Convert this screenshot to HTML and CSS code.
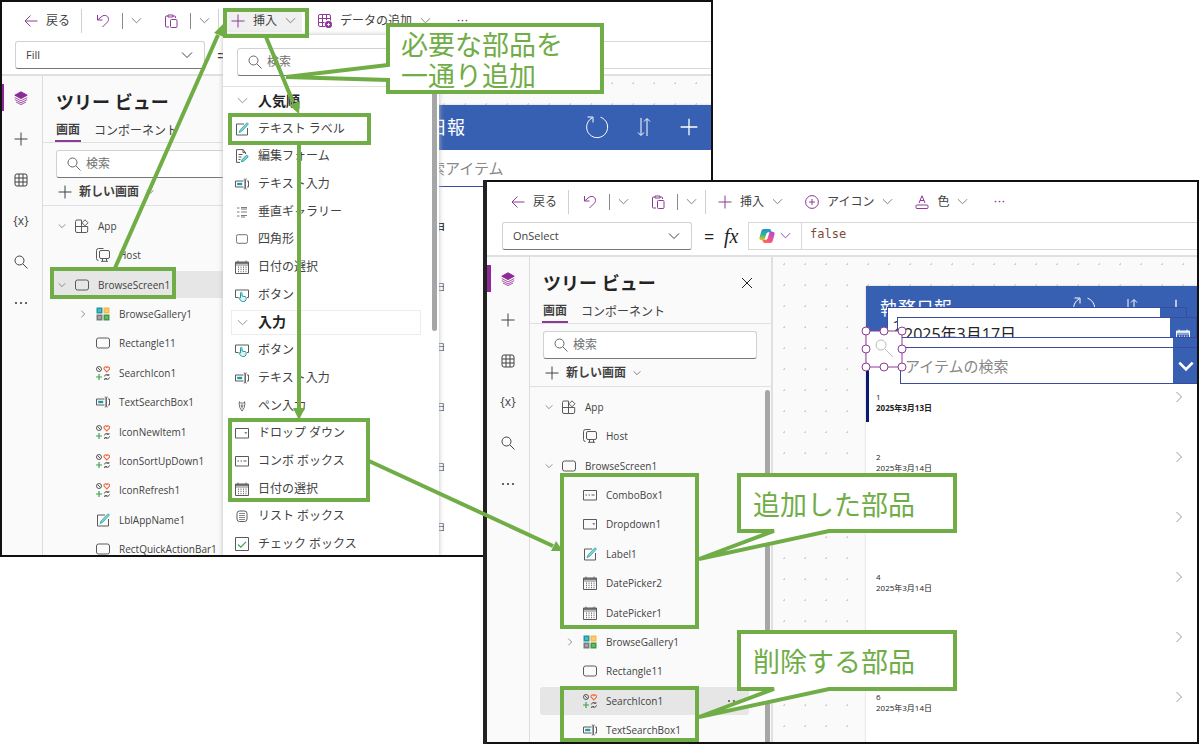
FILE: index.html
```html
<!DOCTYPE html>
<html lang="ja">
<head>
<meta charset="utf-8">
<meta name="viewport" content="width=device-width, initial-scale=1">
<title>部品の追加と削除</title>
<link rel="stylesheet" href="styles.css">
</head>
<body>
<svg class="symbols" aria-hidden="true">
  <defs>
    <linearGradient id="cop-a" x1="0" y1="0" x2="0" y2="1"><stop offset="0" stop-color="#1d8fe8"/><stop offset=".5" stop-color="#2fb58a"/><stop offset="1" stop-color="#f2c51d"/></linearGradient>
    <linearGradient id="cop-b" x1="1" y1="0" x2="0" y2="1"><stop offset="0" stop-color="#a04be8"/><stop offset=".5" stop-color="#ee5090"/><stop offset="1" stop-color="#ff7a3c"/></linearGradient>
  </defs>
  <symbol id="arrow-left" viewBox="0 0 14 14"><path d="M13.5 7H1M6.5 1.5 1 7l5.500 5.500"/></symbol>
  <symbol id="undo" viewBox="0 0 14 14"><path d="M1.500 1v5h5M1.800 5.800 6 2.300c2.500-1.900 6.500-.6 6.500 3 0 1.800-1 2.700-2 3.700L6.500 13"/></symbol>
  <symbol id="paste" viewBox="0 0 14 14"><path d="M5 13H2.500a1 1 0 0 1-1-1V3a1 1 0 0 1 1-1H4M9 2h1.500a1 1 0 0 1 1 1v1M4 1h5v2H4z"/><rect x="6.500" y="5.500" width="6.500" height="8" rx="1"/></symbol>
  <symbol id="chev" viewBox="0 0 12 12"><path d="m1 3.500 5 5 5-5"/></symbol>
  <symbol id="chev-r" viewBox="0 0 12 12"><path d="m3.500 1 5 5-5 5"/></symbol>
  <symbol id="plus" viewBox="0 0 14 14"><path d="M7 .5v13M.5 7h13"/></symbol>
  <symbol id="data" viewBox="0 0 14 14"><path d="M7 12.500H2a1.500 1.500 0 0 1-1.500-1.500V2A1.500 1.500 0 0 1 2 .5h9A1.500 1.500 0 0 1 12.500 2v4.500M.5 4.500h12M.5 8.500h6M4.500.5v12M8.500.5V6"/><circle cx="10.500" cy="10.500" r="3.200" fill="currentColor"/><path d="M10.500 9v3M9 10.500h3" stroke="#fff" stroke-width=".9"/></symbol>
  <symbol id="circle-plus" viewBox="0 0 14 14"><circle cx="7" cy="7" r="6.400"/><path d="M7 4v6M4 7h6"/></symbol>
  <symbol id="font-color" viewBox="0 0 14 14"><path d="M4 8 7 .8 10 8M5 5.500h4"/><rect x="1" y="10" width="12" height="3.500" rx="1"/></symbol>
  <symbol id="dots" viewBox="0 0 14 14"><g fill="currentColor" stroke="none"><circle cx="2" cy="7" r="1.100"/><circle cx="7" cy="7" r="1.100"/><circle cx="12" cy="7" r="1.100"/></g></symbol>
  <symbol id="close" viewBox="0 0 14 14"><path d="m2 2 10 10M12 2 2 12"/></symbol>
  <symbol id="search" viewBox="0 0 14 14"><circle cx="5.500" cy="5.500" r="4.500"/><path d="m8.900 8.900 4.600 4.600"/></symbol>
  <symbol id="layers" viewBox="0 0 14 14"><path d="M7 .8 13.200 4.200 7 7.600.8 4.200z" fill="currentColor"/><path d="m.8 6.500 6.200 3.400 6.200-3.400M.8 8.500 7 11.900l6.200-3.400M2 11l5 2.600 5-2.600" stroke-width=".8"/></symbol>
  <symbol id="table" viewBox="0 0 14 14"><rect x="1" y="1" width="12" height="12" rx="2"/><path d="M1 5h12M1 9h12M5 1v12M9 1v12"/></symbol>
  <symbol id="app" viewBox="0 0 14 14"><path d="M6.500 13.500H2A1.500 1.500 0 0 1 .5 12V2.500A1.500 1.500 0 0 1 2 1h4.500zM.5 7.500h12.200V12a1.500 1.500 0 0 1-1.500 1.500H6.500V7.500"/><path d="m10 .8 3 3-3 3-3-3z"/></symbol>
  <symbol id="host" viewBox="0 0 14 14"><path d="M2.500 12.500A2 2 0 0 1 .5 10.500V2.500a2 2 0 0 1 2-2h5"/><rect x="3.500" y="2.500" width="10" height="8" rx="1.500"/><path d="M6.500 10.500v2.800M10.500 10.500v2.800M5 13.300h7"/></symbol>
  <symbol id="rect" viewBox="0 0 14 14"><rect x=".5" y="2" width="13" height="10" rx="2"/></symbol>
  <symbol id="gallery" viewBox="0 0 14 14"><g stroke="none"><path d="M.5.5h6v6h-6z" fill="#1a9ba1"/><path d="M7.500.5h6v6h-6z" fill="#f8b84e"/><path d="M.5 7.500h6v6h-6z" fill="#7a7a7a"/><path d="M7.500 7.500h6v6h-6z" fill="#3f9a48"/><path d="M2 2h3v3H2z" fill="#4bb9bf"/><path d="M9 2h3v3H9z" fill="#ffc970"/><path d="M2 9h3v3H2z" fill="#a2a2a2"/><path d="M9 9h3v3H9z" fill="#67b56e"/></g></symbol>
  <symbol id="icons" viewBox="0 0 14 14"><circle cx="3" cy="3" r="2.500"/><path d="m1.300 1.300 3.400 3.400"/><path d="M10.800 6 8.200 3.200C7.300 1.500 9.600-.2 10.800 1.600 12-.2 14.300 1.500 13.400 3.200z" stroke="#f0643c" stroke-width="1.100"/><path d="M3 8v6M0 11h6" stroke="#3fa34d" stroke-width="1.200"/><path d="M8.300 10.500c.2-2 3-2.600 4.300-1.200h-2M13.600 11.300c-.2 2-3 2.700-4.500 1.300h2M12.900 8v1.500M8.600 14v-1.500"/></symbol>
  <symbol id="textin" viewBox="0 0 14 14"><path d="M8.500 10H.5V4h8M12 4h1.500v6H12M8.800 2c1 0 1.400.4 1.400 1v8c0 .6-.4 1-1.400 1M11.700 2c-1 0-1.500.4-1.500 1v8c0 .6.500 1 1.500 1"/><path d="M2.200 5.800h5v2.400h-5z" fill="#1a9ba1" stroke="none"/></symbol>
  <symbol id="label" viewBox="0 0 14 14"><path d="M9 2H1.500v11h11V6"/><path d="M4 10.500 5 8l6.500-6.800c.8-.8 2.300.5 1.500 1.400L6.500 9.500z" fill="#7fd6d2" stroke="#2ba5a0" stroke-width=".8"/></symbol>
  <symbol id="form" viewBox="0 0 14 14"><path d="M10.500 5V3.500L8 .6H1.500v12.800H5M8 .6v3h2.500M3.500 5.500h4M3.500 8h3M3.500 10.500h2"/><path d="m6.300 12.700.8-2.200 4.600-4.400 1.600 1.500-4.600 4.500z" fill="#7fd6d2" stroke="#2ba5a0"/></symbol>
  <symbol id="vgallery" viewBox="0 0 14 14"><path d="M2 3h2.500M2 7h2.500M2 11h2.500M6 2.500h6M6 4h6M6 7h6M6 10.500h6M6 12h4" stroke-width=".8"/></symbol>
  <symbol id="calendar" viewBox="0 0 14 14"><path d="M.5 2h13v11.500H.5z"/><path d="M.5 3h13" stroke-width="1.600"/><path d="M3 .5v2M11 .5v2M.5 5h13" stroke-width=".8"/><path d="M3.500 6.500v6M6 6.500v6M8.500 6.500v6M11 6.500v6" stroke-width=".8" stroke-dasharray="1.400 .8"/></symbol>
  <symbol id="button" viewBox="0 0 14 14"><path d="M3.500 9.500h-3V2h13v7.500H12"/><path d="M5.500 10V5.200c0-1.200 1.500-1.200 1.500 0V8l3.500.7c1.200.3 1 4.500-1.500 4.900-2.500.3-3-.6-5-3.300.2-.7 1-.8 1.500-.3z" stroke="#1a9ba1" fill="#dff3f2"/></symbol>
  <symbol id="pen" viewBox="0 0 14 14"><path d="M4 1.500v2h6v-2M3.500 3.500 4.500 9 7 13l2.500-4 1-5.500M7 7v3"/><circle cx="7" cy="6.500" r="1"/></symbol>
  <symbol id="dropdown" viewBox="0 0 14 14"><path d="M.5 2.500h13v9.500H.5z"/><path d="M9.300 6.200h3L10.800 8z" fill="currentColor" stroke="none"/></symbol>
  <symbol id="combo" viewBox="0 0 14 14"><path d="M.5 2.500h13v9.500H.5z"/><path d="M2.500 7h1.500M5.500 7H7M8.500 7h3"/></symbol>
  <symbol id="listbox" viewBox="0 0 14 14"><rect x="2" y="2" width="10" height="10.500" rx="2.500"/><path d="M4 4.500h6M4 6.500h6M4 8.500h6M4 10.500h6" stroke-width=".7"/></symbol>
  <symbol id="check" viewBox="0 0 14 14"><path d="M.5.5h13v13H.5z"/><path d="m3 7.500 2.800 2.700L11 4.800" stroke="#3fa34d" stroke-width="1.200"/></symbol>
  <symbol id="copilot" viewBox="0 0 16 16"><g stroke="none"><path d="M5 1h5.200c1.200 0 1.700.8 2 1.800l.4 1.400H9.800C8.300 4.200 7.600 5 7.200 6.300L6 10.500c-.4 1.300-1 1.700-2.300 1.700H2.500C.8 12.200.1 11 .6 9.200l1.600-5.700C2.700 1.700 3.500 1 5 1z" fill="url(#cop-a)"/><path d="M11 15H5.800c-1.200 0-1.700-.8-2-1.800l-.4-1.400h2.800c1.500 0 2.200-.8 2.600-2.100L10 5.500c.4-1.300 1-1.700 2.300-1.700h1.200c1.700 0 2.400 1.200 1.900 3l-1.600 5.700c-.5 1.800-1.300 2.500-2.800 2.500z" fill="url(#cop-b)"/></g></symbol>
  <symbol id="refresh" viewBox="0 0 24 24"><path d="M15.500 2.200a10.500 10.500 0 1 1-8.500.8M2.500 2h5.500v5.500"/></symbol>
  <symbol id="sort" viewBox="0 0 14 20"><path d="M4 1v17M1 15.500l3 3 3-3M10 19V2M7 4.500l3-3 3 3"/></symbol>
</svg>

<main class="stage">
  <section class="window window-back" aria-label="挿入前の画面">
    <div class="toolbar">
      <button class="tool"><svg class="i14"><use href="#arrow-left"/></svg>戻る</button>
      <span class="rule"></span>
      <button class="tool" aria-label="元に戻す"><svg class="i14"><use href="#undo"/></svg></button>
      <span class="split"></span>
      <button class="tool" aria-label="元に戻すの履歴"><svg class="i10 mute"><use href="#chev"/></svg></button>
      <button class="tool paste" aria-label="貼り付け"><svg class="i14"><use href="#paste"/></svg></button>
      <span class="split"></span>
      <button class="tool" aria-label="貼り付けオプション"><svg class="i10 mute"><use href="#chev"/></svg></button>
      <span class="rule close-rule"></span>
      <button class="tool insert open"><svg class="i14"><use href="#plus"/></svg>挿入<svg class="i10 mute"><use href="#chev"/></svg></button>
      <button class="tool wide"><svg class="i14"><use href="#data"/></svg>データの追加<svg class="i10 mute"><use href="#chev"/></svg></button>
      <button class="tool more" aria-label="その他"><svg class="i10"><use href="#dots"/></svg></button>
    </div>
    <div class="formula">
      <div class="property"><select aria-label="プロパティ"><option>Fill</option></select><svg class="i12"><use href="#chev"/></svg></div>
      <span class="equals">=</span>
      <div class="expression blank"></div>
    </div>
    <div class="body">
      <nav class="rail" aria-label="作成メニュー">
        <button class="active" aria-label="ツリー ビュー"><svg class="i14"><use href="#layers"/></svg></button>
        <button aria-label="挿入"><svg class="i14"><use href="#plus"/></svg></button>
        <button aria-label="データ"><svg class="i14"><use href="#table"/></svg></button>
        <button>{x}</button>
        <button aria-label="検索"><svg class="i14"><use href="#search"/></svg></button>
        <button aria-label="その他"><svg class="i14"><use href="#dots"/></svg></button>
      </nav>
      <aside class="tree">
        <header class="tree-head"><h2>ツリー ビュー</h2></header>
        <div class="tabs"><button class="on">画面</button><button>コンポーネント</button></div>
        <label class="search"><svg class="i14"><use href="#search"/></svg><input type="text" placeholder="検索" aria-label="ツリーを検索"></label>
        <button class="new"><svg class="i14"><use href="#plus"/></svg>新しい画面<svg class="i8"><use href="#chev"/></svg></button>
        <ul class="nodes">
          <li><svg class="i8 tw"><use href="#chev"/></svg><svg class="i14"><use href="#app"/></svg>App</li>
          <li class="sub"><svg class="i14"><use href="#host"/></svg>Host</li>
          <li class="sel"><svg class="i8 tw"><use href="#chev"/></svg><svg class="i14"><use href="#rect"/></svg>BrowseScreen1</li>
          <li class="sub"><svg class="i8 tw"><use href="#chev-r"/></svg><svg class="i14"><use href="#gallery"/></svg>BrowseGallery1</li>
          <li class="sub"><svg class="i14"><use href="#rect"/></svg>Rectangle11</li>
          <li class="sub"><svg class="i14"><use href="#icons"/></svg>SearchIcon1</li>
          <li class="sub"><svg class="i14"><use href="#textin"/></svg>TextSearchBox1</li>
          <li class="sub"><svg class="i14"><use href="#icons"/></svg>IconNewItem1</li>
          <li class="sub"><svg class="i14"><use href="#icons"/></svg>IconSortUpDown1</li>
          <li class="sub"><svg class="i14"><use href="#icons"/></svg>IconRefresh1</li>
          <li class="sub"><svg class="i14"><use href="#label"/></svg>LblAppName1</li>
          <li class="sub"><svg class="i14"><use href="#rect"/></svg>RectQuickActionBar1</li>
        </ul>
      </aside>
      <div class="canvas">
        <div class="app">
          <header class="app-bar"><h3>執務日報</h3><svg class="i24"><use href="#refresh"/></svg><svg class="sort"><use href="#sort"/></svg><svg class="i18"><use href="#plus"/></svg></header>
          <input class="app-search" type="text" placeholder="検索アイテム" aria-label="検索アイテム">
          <ul class="records">
            <li><div><span>1</span><b>2025年3月13日</b></div></li>
            <li><div><span>2</span><span>2025年3月14日</span></div></li>
            <li><div><span>3</span><span>2025年3月14日</span></div></li>
            <li><div><span>4</span><span>2025年3月14日</span></div></li>
            <li><div><span>5</span><span>2025年3月14日</span></div></li>
            <li><div><span>6</span><span>2025年3月14日</span></div></li>
          </ul>
        </div>
      </div>
    </div>
    <div class="menu">
      <label class="search"><svg class="i14"><use href="#search"/></svg><input type="text" placeholder="検索" aria-label="部品を検索"></label>
      <ul class="parts">
        <li class="group"><svg class="i10"><use href="#chev"/></svg>人気順</li>
        <li><svg class="i14"><use href="#label"/></svg>テキスト ラベル</li>
        <li><svg class="i14"><use href="#form"/></svg>編集フォーム</li>
        <li><svg class="i14"><use href="#textin"/></svg>テキスト入力</li>
        <li><svg class="i14"><use href="#vgallery"/></svg>垂直ギャラリー</li>
        <li><svg class="i14 small"><use href="#rect"/></svg>四角形</li>
        <li><svg class="i14"><use href="#calendar"/></svg>日付の選択</li>
        <li><svg class="i14"><use href="#button"/></svg>ボタン</li>
        <li class="group boxed"><svg class="i10"><use href="#chev"/></svg>入力</li>
        <li><svg class="i14"><use href="#button"/></svg>ボタン</li>
        <li><svg class="i14"><use href="#textin"/></svg>テキスト入力</li>
        <li><svg class="i14 small"><use href="#pen"/></svg>ペン入力</li>
        <li><svg class="i14"><use href="#dropdown"/></svg>ドロップ ダウン</li>
        <li><svg class="i14"><use href="#combo"/></svg>コンボ ボックス</li>
        <li><svg class="i14"><use href="#calendar"/></svg>日付の選択</li>
        <li><svg class="i14"><use href="#listbox"/></svg>リスト ボックス</li>
        <li><svg class="i14"><use href="#check"/></svg>チェック ボックス</li>
      </ul>
      <span class="menu-scroll"></span>
    </div>
  </section>

  <section class="window window-front" aria-label="挿入後の画面">
    <div class="toolbar">
      <button class="tool"><svg class="i14"><use href="#arrow-left"/></svg>戻る</button>
      <span class="rule"></span>
      <button class="tool" aria-label="元に戻す"><svg class="i14"><use href="#undo"/></svg></button>
      <span class="split"></span>
      <button class="tool" aria-label="元に戻すの履歴"><svg class="i10 mute"><use href="#chev"/></svg></button>
      <button class="tool paste" aria-label="貼り付け"><svg class="i14"><use href="#paste"/></svg></button>
      <span class="split"></span>
      <button class="tool" aria-label="貼り付けオプション"><svg class="i10 mute"><use href="#chev"/></svg></button>
      <span class="rule close-rule"></span>
      <button class="tool insert"><svg class="i14"><use href="#plus"/></svg>挿入<svg class="i10 mute"><use href="#chev"/></svg></button>
      <button class="tool wide"><svg class="i14"><use href="#circle-plus"/></svg>アイコン<svg class="i10 mute"><use href="#chev"/></svg></button>
      <button class="tool wide"><svg class="i14"><use href="#font-color"/></svg>色<svg class="i10 mute"><use href="#chev"/></svg></button>
      <button class="tool more" aria-label="その他"><svg class="i10"><use href="#dots"/></svg></button>
    </div>
    <div class="formula">
      <div class="property"><select aria-label="プロパティ"><option>OnSelect</option></select><svg class="i12"><use href="#chev"/></svg></div>
      <span class="equals">=</span><span class="fx">fx</span>
      <button class="copilot" aria-label="Copilot"><svg class="i16"><use href="#copilot"/></svg><svg class="i10"><use href="#chev"/></svg></button>
      <input class="expression" type="text" value="false" aria-label="数式">
    </div>
    <div class="body">
      <nav class="rail" aria-label="作成メニュー">
        <button class="active" aria-label="ツリー ビュー"><svg class="i14"><use href="#layers"/></svg></button>
        <button aria-label="挿入"><svg class="i14"><use href="#plus"/></svg></button>
        <button aria-label="データ"><svg class="i14"><use href="#table"/></svg></button>
        <button>{x}</button>
        <button aria-label="検索"><svg class="i14"><use href="#search"/></svg></button>
        <button aria-label="その他"><svg class="i14"><use href="#dots"/></svg></button>
      </nav>
      <aside class="tree">
        <header class="tree-head"><h2>ツリー ビュー</h2><button aria-label="閉じる"><svg class="i14"><use href="#close"/></svg></button></header>
        <div class="tabs"><button class="on">画面</button><button>コンポーネント</button></div>
        <label class="search"><svg class="i14"><use href="#search"/></svg><input type="text" placeholder="検索" aria-label="ツリーを検索"></label>
        <button class="new"><svg class="i14"><use href="#plus"/></svg>新しい画面<svg class="i8"><use href="#chev"/></svg></button>
        <ul class="nodes">
          <li><svg class="i8 tw"><use href="#chev"/></svg><svg class="i14"><use href="#app"/></svg>App</li>
          <li class="sub"><svg class="i14"><use href="#host"/></svg>Host</li>
          <li><svg class="i8 tw"><use href="#chev"/></svg><svg class="i14"><use href="#rect"/></svg>BrowseScreen1</li>
          <li class="sub"><svg class="i14"><use href="#combo"/></svg>ComboBox1</li>
          <li class="sub"><svg class="i14"><use href="#dropdown"/></svg>Dropdown1</li>
          <li class="sub"><svg class="i14"><use href="#label"/></svg>Label1</li>
          <li class="sub"><svg class="i14"><use href="#calendar"/></svg>DatePicker2</li>
          <li class="sub"><svg class="i14"><use href="#calendar"/></svg>DatePicker1</li>
          <li class="sub"><svg class="i8 tw"><use href="#chev-r"/></svg><svg class="i14"><use href="#gallery"/></svg>BrowseGallery1</li>
          <li class="sub"><svg class="i14"><use href="#rect"/></svg>Rectangle11</li>
          <li class="sub sel"><svg class="i14"><use href="#icons"/></svg>SearchIcon1<svg class="i14 end"><use href="#dots"/></svg></li>
          <li class="sub"><svg class="i14"><use href="#textin"/></svg>TextSearchBox1</li>
        </ul>
        <span class="tree-scroll"></span>
      </aside>
      <div class="canvas">
        <div class="app">
          <header class="app-bar"><h3>執務日報</h3><svg class="i24"><use href="#refresh"/></svg><svg class="sort"><use href="#sort"/></svg><svg class="i18"><use href="#plus"/></svg></header>
          <div class="app-search"></div>
          <ul class="records">
            <li class="first"><div><span>1</span><b>2025年3月13日</b></div><svg class="i12"><use href="#chev-r"/></svg></li>
            <li><div><span>2</span><span>2025年3月14日</span></div><svg class="i12"><use href="#chev-r"/></svg></li>
            <li><div></div><svg class="i12"><use href="#chev-r"/></svg></li>
            <li><div><span>4</span><span>2025年3月14日</span></div><svg class="i12"><use href="#chev-r"/></svg></li>
            <li><div></div><svg class="i12"><use href="#chev-r"/></svg></li>
            <li><div><span>6</span><span>2025年3月14日</span></div><svg class="i12"><use href="#chev-r"/></svg></li>
          </ul>
          <div class="control date-one"><input type="text" value="2025年3月17日" aria-label="DatePicker1"><span class="cap"></span></div>
          <div class="control date-two"><input type="text" value="2025年3月17日" aria-label="DatePicker2"><span class="cap"><svg class="i14"><use href="#calendar"/></svg></span></div>
          <div class="control drop-one"><span class="fill"></span><span class="cap"></span></div>
          <div class="control combo-one"><input type="text" placeholder="アイテムの検索" aria-label="ComboBox1"><span class="cap"><svg class="i16"><use href="#chev"/></svg></span></div>
          <svg class="selected-icon" viewBox="0 0 48 48" aria-label="SearchIcon1">
            <rect class="pane" x="6" y="6" width="36" height="36"/>
            <g class="glass"><circle cx="21" cy="20" r="5"/><path d="m25 24 8 8"/></g>
            <g class="grips"><circle cx="6" cy="6" r="4"/><circle cx="24" cy="6" r="4"/><circle cx="42" cy="6" r="4"/><circle cx="6" cy="24" r="4"/><circle cx="42" cy="24" r="4"/><circle cx="6" cy="42" r="4"/><circle cx="24" cy="42" r="4"/><circle cx="42" cy="42" r="4"/></g>
          </svg>
        </div>
      </div>
    </div>
  </section>

  <svg class="marks" aria-hidden="true">
    <g class="line">
      <rect x="225" y="10" width="82" height="26"/>
      <rect x="230" y="115" width="139" height="28"/>
      <rect x="52" y="269" width="122" height="28"/>
      <rect x="230" y="420" width="138" height="80"/>
      <rect x="562" y="475" width="135" height="152"/>
      <rect x="562" y="688" width="135" height="52"/>
      <path d="M115 268 218 35M266 37l27 65M299 144v266M369 461l184 85"/>
      <path class="paper" d="M388 25h214v67H388V80L286 77 388 65z"/>
      <path class="paper" d="M739 475h216v56H829l-130 28 75-28H739z"/>
      <path class="paper" d="M739 632h216v57H829l-130 28 75-28H739z"/>
    </g>
    <g class="head"><path d="m223 24-9 9 10 4zM299 114l1-13-11 4zM299 420l-6-12h12zM563 551l-7-10-5 10z"/></g>
  </svg>
  <p class="note note-add">必要な部品を<br>一通り追加</p>
  <p class="note note-added">追加した部品</p>
  <p class="note note-remove">削除する部品</p>
</main>
</body>
</html>
```

FILE: styles.css
```css
:root {
  --purple: #8b3a96;
  --green: #70ad47;
  --blue: #3760b2;
  --navy: #3b4ba0;
  --text: #424242;
  --line: #e0e0e0;
}

* { box-sizing: border-box; }

body {
  margin: 0;
  background: #fff;
  color: var(--text);
  font: 12px/16px "Open Sans", "Noto Sans CJK JP", sans-serif;
}

h2, h3, p, ul { margin: 0; padding: 0; }
ul { list-style: none; }

button, input, select {
  margin: 0;
  padding: 0;
  border: 0;
  background: none;
  color: inherit;
  font: inherit;
}

svg {
  flex: none;
  fill: none;
  stroke: currentColor;
  stroke-width: 1;
}

.symbols { position: absolute; width: 0; height: 0; }
.i8 { width: 8px; height: 8px; }
.i10 { width: 11px; height: 11px; }
.i12 { width: 12px; height: 12px; }
.i14 { width: 14px; height: 14px; }
.i16 { width: 16px; height: 16px; }
.i18 { width: 18px; height: 18px; }
.i24 { width: 24px; height: 24px; }
.small { padding: 1px; }

.stage {
  position: relative;
  min-height: 744px;
  overflow: hidden;
}

/* Windows */
.window {
  position: absolute;
  display: flex;
  flex-direction: column;
  overflow: hidden;
  background: #fff;
}

.window::after {
  content: "";
  position: absolute;
  inset: 0;
  border: 2px solid #111;
  pointer-events: none;
}

.window-back { left: 0; top: 0; width: 713px; height: 557px; }

.window-front {
  left: 483px;
  right: 1px;
  top: 180px;
  height: 564px;
  padding-top: 1px;
  border-left: 4px solid #222;
}

.window-front::after { border-left: 0; }

/* Toolbar */
.toolbar {
  display: flex;
  flex: none;
  align-items: center;
  height: 41px;
  padding-left: 24px;
}

.tool {
  display: flex;
  align-items: center;
  gap: 8px;
  height: 22px;
  white-space: nowrap;
}

.tool svg { color: var(--purple); }
.tool .mute { color: #777; }
.rule { width: 1px; height: 24px; margin: 0 14px 0 11px; background: #d0d0d0; }
.split { width: 1px; height: 16px; margin: 0 8px 0 12px; background: #8a8a8a; }
.close-rule { margin: 0 6px 0 8px; }
.paste { margin-left: 22px; }
.insert { padding: 0 6px; }
.open { background: #f0f0f0; }
.wide { margin-left: 16px; }
.wide + .wide { margin-left: 22px; }
.more { margin-left: 26px; }

/* Formula bar */
.formula {
  display: flex;
  flex: none;
  align-items: center;
  height: 35px;
  padding: 0 0 6px 15px;
  border-bottom: 2px solid var(--line);
}

.property { position: relative; flex: none; width: 190px; height: 28px; }

.property select {
  width: 100%;
  height: 100%;
  padding-left: 10px;
  border: 1px solid #d1d1d1;
  border-bottom-color: #777;
  border-radius: 3px;
  background: #fff;
  appearance: none;
  font-size: 11px;
}

.property svg { position: absolute; right: 12px; top: 8px; }
.equals { width: 20px; margin-left: 12px; font-size: 18px; color: #222; }
.fx { width: 24px; color: #222; font: italic 20px/24px "Liberation Serif", serif; }

.copilot {
  display: flex;
  align-items: center;
  justify-content: center;
  gap: 5px;
  flex: none;
  width: 54px;
  height: 28px;
  border: 1px solid #d8d8d8;
  color: var(--purple);
}

.expression {
  flex: 1;
  min-width: 0;
  height: 28px;
  padding: 0 8px 3px;
  border: solid #d8d8d8;
  border-width: 1px 0;
  color: #7d4a3c;
  font: 12px/16px "DejaVu Sans Mono", monospace;
}

.blank { margin-left: 78px; }

/* Body */
.body {
  display: flex;
  flex: 1;
  min-height: 0;
  background: #fafafa;
}

.rail {
  flex: none;
  width: 43px;
  padding-top: 1px;
  border-right: 1px solid #dcdcdc;
}

.rail button {
  display: flex;
  align-items: center;
  justify-content: center;
  width: 100%;
  height: 41px;
}

.rail .active {
  background: linear-gradient(#8e2a96, #8e2a96) left center / 4px 27px no-repeat;
  color: #8e2a96;
}

.tree {
  position: relative;
  display: flex;
  flex: none;
  flex-direction: column;
  width: 243px;
  overflow: hidden;
  border-right: 2px solid var(--line);
}

.tree-head {
  display: flex;
  align-items: center;
  justify-content: space-between;
  flex: none;
  height: 43px;
  padding: 8px 17px 0 13px;
  color: #242424;
}

.tree-head h2 { font-size: 18px; line-height: 24px; }
.tree-head button { height: 14px; }

.tabs {
  display: flex;
  flex: none;
  gap: 12px;
  height: 24px;
  padding-left: 12px;
  border-bottom: 1px solid var(--line);
}

.tabs button { padding: 0 1px; }
.tabs .on { border-bottom: 2px solid var(--purple); font-weight: 700; }

.search {
  display: flex;
  flex: none;
  align-items: center;
  gap: 5px;
  height: 28px;
  margin: 7px 14px 0 13px;
  padding-left: 10px;
  border: 1px solid #d1d1d1;
  border-bottom-color: #777;
  border-radius: 3px;
  background: #fff;
}

.search svg { color: #666; }
.search input { flex: 1; min-width: 0; }
.search input::placeholder { color: #707070; opacity: 1; }

.new {
  display: flex;
  flex: none;
  align-items: center;
  gap: 7px;
  height: 28px;
  padding-left: 15px;
  border-bottom: 1px solid var(--line);
  font-weight: 700;
}

.nodes {
  display: grid;
  flex: none;
  grid-template-rows: repeat(12, 1fr);
  height: 353px;
  margin-top: 5px;
  padding: 0 22px 0 10px;
  font-size: 10px;
}

.nodes li {
  display: flex;
  align-items: center;
  gap: 9px;
  margin: 1px 0;
  padding-left: 22px;
  border-radius: 3px;
  white-space: nowrap;
}

.nodes svg, .parts svg { color: #5a5a5a; }
.nodes .tw { margin-left: -17px; }
.nodes .sub { padding-left: 43px; }
.nodes .sel { background: #e6e6e6; }
.nodes .end { margin-left: auto; margin-right: 8px; }

.tree-scroll {
  position: absolute;
  right: 1px;
  top: 133px;
  bottom: 0;
  width: 5px;
  border-radius: 3px 3px 0 0;
  background: #a6a6a6;
}

/* Canvas */
.canvas {
  flex: 1;
  min-width: 0;
  padding: 29px 0 0 93px;
  background: radial-gradient(circle, #d2d2d2 1px, transparent 1px) 1px -3px / 21px 21px;
}

.app {
  position: relative;
  height: 100%;
  background: #fff;
  box-shadow: 0 0 2px #ccc;
}

.app-bar {
  display: flex;
  align-items: center;
  height: 45px;
  padding: 0 15px 2px 14px;
  background: var(--blue);
  color: #fff;
}

.app-bar h3 { flex: none; font-size: 18px; font-weight: 400; line-height: 24px; }
.app-bar .i24 { margin-left: 120px; }
.app-bar .sort { width: 14px; height: 20px; margin-left: 28px; }
.app-bar .i18 { margin-left: 29px; }

.app-search {
  display: block;
  width: 100%;
  height: 37px;
  padding-left: 36px;
  font-size: 15px;
}

input.app-search { border-bottom: 1px solid var(--navy); }
.app-search::placeholder, .combo-one input::placeholder { color: #888; opacity: 1; }

.records {
  display: grid;
  grid-auto-rows: 60px;
  padding-top: 23px;
  color: #222;
  font-size: 8px;
  line-height: 11px;
}

.records li { display: flex; justify-content: space-between; padding: 0 14px 0 10px; }
.records div { display: flex; flex-direction: column; }
.records svg { color: #999; }
.records .first {
  height: 77px;
  margin-top: -23px;
  padding-top: 23px;
  box-shadow: inset 3px 0 #0a1a70;
}
.records .first { height: 54px; }

/* Overlapping controls placed freely on the edited screen */
.control {
  position: absolute;
  display: flex;
  height: 37px;
  border: 1px solid var(--navy);
  background: #fff;
  color: #222;
  font-size: 16px;
}

.control input, .fill { flex: 1; min-width: 0; padding-left: 5px; }

.cap {
  display: flex;
  align-items: center;
  justify-content: center;
  flex: none;
  width: 26px;
  background: var(--blue);
  color: #fff;
}

.date-one { left: 21px; right: 12px; top: 21px; }
.date-two { left: 31px; right: 2px; top: 31px; }
.date-two input { padding: 0 0 6px 6px; }
.drop-one { left: 34px; right: -1px; top: 51px; }
.combo-one { left: 34px; right: -1px; top: 61px; }
.combo-one input { padding-left: 4px; font-size: 15px; }
.combo-one .i16 { stroke-width: 2; }

.selected-icon { position: absolute; left: -6px; top: 39px; width: 48px; height: 48px; }
.pane { fill: #fff; stroke: var(--purple); }
.glass { stroke: #bbb; }
.grips { fill: #fff; stroke: var(--purple); }

/* Insert menu */
.menu {
  position: absolute;
  left: 223px;
  top: 35px;
  width: 216px;
  height: 522px;
  background: #fff;
  box-shadow: 0 0 5px #bbb;
}

.menu .search { margin: 13px 14px 10px; }

.parts {
  display: grid;
  grid-template-rows: repeat(17, 1fr);
  height: 472px;
  padding: 0 18px 0 8px;
  border-top: 1px solid var(--line);
}

.parts li {
  display: flex;
  align-items: center;
  gap: 9px;
  padding-left: 4px;
  white-space: nowrap;
}

.parts .group { gap: 10px; padding-left: 6px; color: #242424; font-size: 14px; font-weight: 700; }
.parts .group svg { color: #888; }
.parts .boxed { margin: 1px 0; border: 1px solid #ececec; padding-left: 5px; }

.menu-scroll {
  position: absolute;
  right: 2px;
  top: 40px;
  width: 5px;
  height: 256px;
  border-radius: 3px;
  background: #a6a6a6;
}

/* Annotations */
.marks { position: absolute; left: 0; top: 0; width: 100%; height: 100%; pointer-events: none; }
.line { stroke: var(--green); stroke-width: 4; }
.paper { fill: #fff; }
.head { fill: var(--green); stroke: none; }

.note {
  position: absolute;
  color: var(--green);
  font-size: 27px;
  line-height: 31px;
  white-space: nowrap;
}

.note-add { left: 401px; top: 29px; }
.note-added { left: 753px; top: 489px; }
.note-remove { left: 753px; top: 646px; }
```
